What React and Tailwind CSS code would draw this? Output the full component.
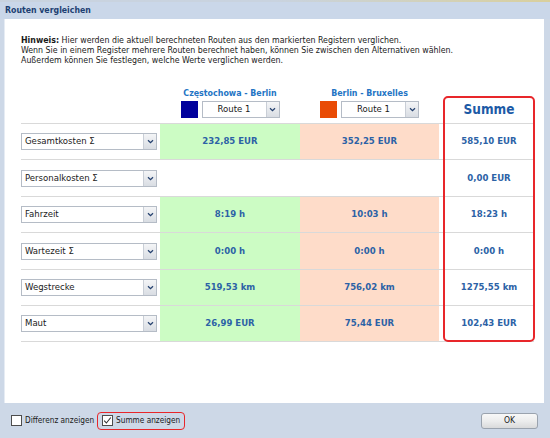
import React from 'react';

const rows = [
    { label: 'Gesamtkosten Σ', a: '232,85 EUR', b: '352,25 EUR', sum: '585,10 EUR', h: 'h-[36px]' },
    { label: 'Personalkosten Σ', a: '', b: '', sum: '0,00 EUR', h: 'h-[37px]', blank: true },
    { label: 'Fahrzeit', a: '8:19 h', b: '10:03 h', sum: '18:23 h', h: 'h-[36px]' },
    { label: 'Wartezeit Σ', a: '0:00 h', b: '0:00 h', sum: '0:00 h', h: 'h-[37px]' },
    { label: 'Wegstrecke', a: '519,53 km', b: '756,02 km', sum: '1275,55 km', h: 'h-[36px]' },
    { label: 'Maut', a: '26,99 EUR', b: '75,44 EUR', sum: '102,43 EUR', h: 'h-[36px]' },
];

const Chevron = () => (
    <svg width="7" height="5" viewBox="0 0 7 5">
        <path d="M1 1.2 L3.5 3.6 L6 1.2" fill="none" stroke="#24406e" strokeWidth="1.3" />
    </svg>
);

// combo box in the look of the old windows forms
const Combo = ({ text, className, center }) => (
    <div className={`flex h-[17px] border border-[#b5bcc6] bg-white ${className}`}>
        <div className={`flex-1 flex items-center text-[9.5px] text-[#1a1a1a] ${center ? 'justify-center' : 'pl-[3px]'}`}>
            {text}
        </div>
        <div className="w-[13px] flex items-center justify-center border-l border-[#c9ced6] bg-gradient-to-b from-[#f4f5f7] to-[#d9dde3]">
            <Chevron />
        </div>
    </div>
);

const CheckBox = ({ checked }) => (
    <div className="w-[11px] h-[11px] border border-[#4d4d4d] bg-white flex items-center justify-center">
        {checked && (
            <svg width="9" height="9" viewBox="0 0 9 9">
                <path d="M1.2 4.6 L3.4 7 L7.8 1.5" fill="none" stroke="#333" strokeWidth="1.1" />
            </svg>
        )}
    </div>
);

export default function App() {
    return (
        <div className="w-[550px] h-[438px] bg-[#cdd8e7] flex flex-col overflow-hidden font-['DejaVu_Sans_Condensed','Liberation_Sans',sans-serif]">
            {/* map peeking out above the dialog */}
            <div className="h-[2px] bg-gradient-to-r from-[#c9d3df] via-[#c9d3df] to-[#d9cf9c]"></div>

            {/* Title */}
            <div className="h-[17px] flex items-center pl-[5px] bg-[#cad7e9]">
                <span className="text-[8.7px] font-bold text-[#1d3f72]">Routen vergleichen</span>
            </div>

            {/* Content panel */}
            <div className="h-[384px] ml-[4px] mr-[6px] bg-white border-l border-[#e6ecf4]">
                <div className="pt-[16px] pl-[16px] text-[8.75px] leading-[10px] text-[#1a1a1a]">
                    <p><b>Hinweis:</b> Hier werden die aktuell berechneten Routen aus den markierten Registern verglichen.</p>
                    <p>Wenn Sie in einem Register mehrere Routen berechnet haben, können Sie zwischen den Alternativen wählen.</p>
                    <p>Außerdem können Sie festlegen, welche Werte verglichen werden.</p>
                </div>

                <div className="relative ml-[16px] mt-[19px] w-[513px]">
                    {/* column headers */}
                    <div className="flex h-[39px]">
                        <div className="w-[139px]"></div>
                        <div className="w-[140px] flex flex-col items-center pt-[4px]">
                            <span className="text-[8.8px] font-bold text-[#2374c4] leading-[11px]">Częstochowa - Berlin</span>
                            <div className="flex gap-[4px] mt-[2px]">
                                <div className="w-[17px] h-[17px] bg-[#00009c]"></div>
                                <Combo text="Route 1" className="w-[78px]" center />
                            </div>
                        </div>
                        <div className="w-[139px] flex flex-col items-center pt-[4px]">
                            <span className="text-[8.8px] font-bold text-[#2374c4] leading-[11px]">Berlin - Bruxelles</span>
                            <div className="flex gap-[4px] mt-[2px]">
                                <div className="w-[17px] h-[17px] bg-[#e94b05]"></div>
                                <Combo text="Route 1" className="w-[78px]" center />
                            </div>
                        </div>
                        <div className="w-[5px]"></div>
                        <div className="w-[90px] flex justify-center pt-[17px]">
                            <span className="text-[13.5px] font-bold text-[#1c5aa6] leading-[16px]">Summe</span>
                        </div>
                    </div>

                    {/* rows */}
                    <div className="border-t border-[#d9d9d9]">
                        {rows.map((r) => (
                            <div key={r.label} className={`flex ${r.h} border-b border-[#d9d9d9]`}>
                                <div className="w-[136px] flex items-center">
                                    <Combo text={r.label} className="w-[136px]" />
                                </div>
                                <div className="w-[3px]"></div>
                                <div className={`w-[140px] flex items-center justify-center ${r.blank ? '' : 'bg-[#ccfcc4]'}`}>
                                    <span className="text-[9.5px] font-bold text-[#2c62a6]">{r.a}</span>
                                </div>
                                <div className={`w-[139px] flex items-center justify-center ${r.blank ? '' : 'bg-[#fedcc9]'}`}>
                                    <span className="text-[9.5px] font-bold text-[#2c62a6]">{r.b}</span>
                                </div>
                                <div className="w-[5px]"></div>
                                <div className="w-[90px] flex items-center justify-center">
                                    <span className="text-[9.5px] font-bold text-[#2c62a6]">{r.sum}</span>
                                </div>
                            </div>
                        ))}
                    </div>

                    {/* red highlight around the sum column */}
                    <div className="absolute left-[422px] top-[12px] w-[92px] h-[246px] border-2 border-[#e8262a] rounded-[5px] pointer-events-none"></div>
                </div>
            </div>

            {/* Footer */}
            <div className="flex-1 flex items-center pl-[11px] pr-[12px]">
                <div className="flex items-center gap-[3px]">
                    <CheckBox />
                    <span className="text-[8.2px] text-[#1a1a1a]">Differenz anzeigen</span>
                </div>
                <div className="ml-[3px] flex items-center gap-[3px] h-[18px] px-[4px] border-[1.5px] border-[#e8262a] rounded-[4px]">
                    <CheckBox checked />
                    <span className="text-[8.2px] text-[#1a1a1a]">Summe anzeigen</span>
                </div>
                <div className="ml-auto w-[57px] h-[16px] flex items-center justify-center rounded-[3px] border border-[#9aa3ae] bg-gradient-to-b from-[#f8f8f8] via-[#eceded] to-[#d9dadb] text-[8.5px] text-[#1a1a1a]">
                    OK
                </div>
            </div>
        </div>
    );
}
